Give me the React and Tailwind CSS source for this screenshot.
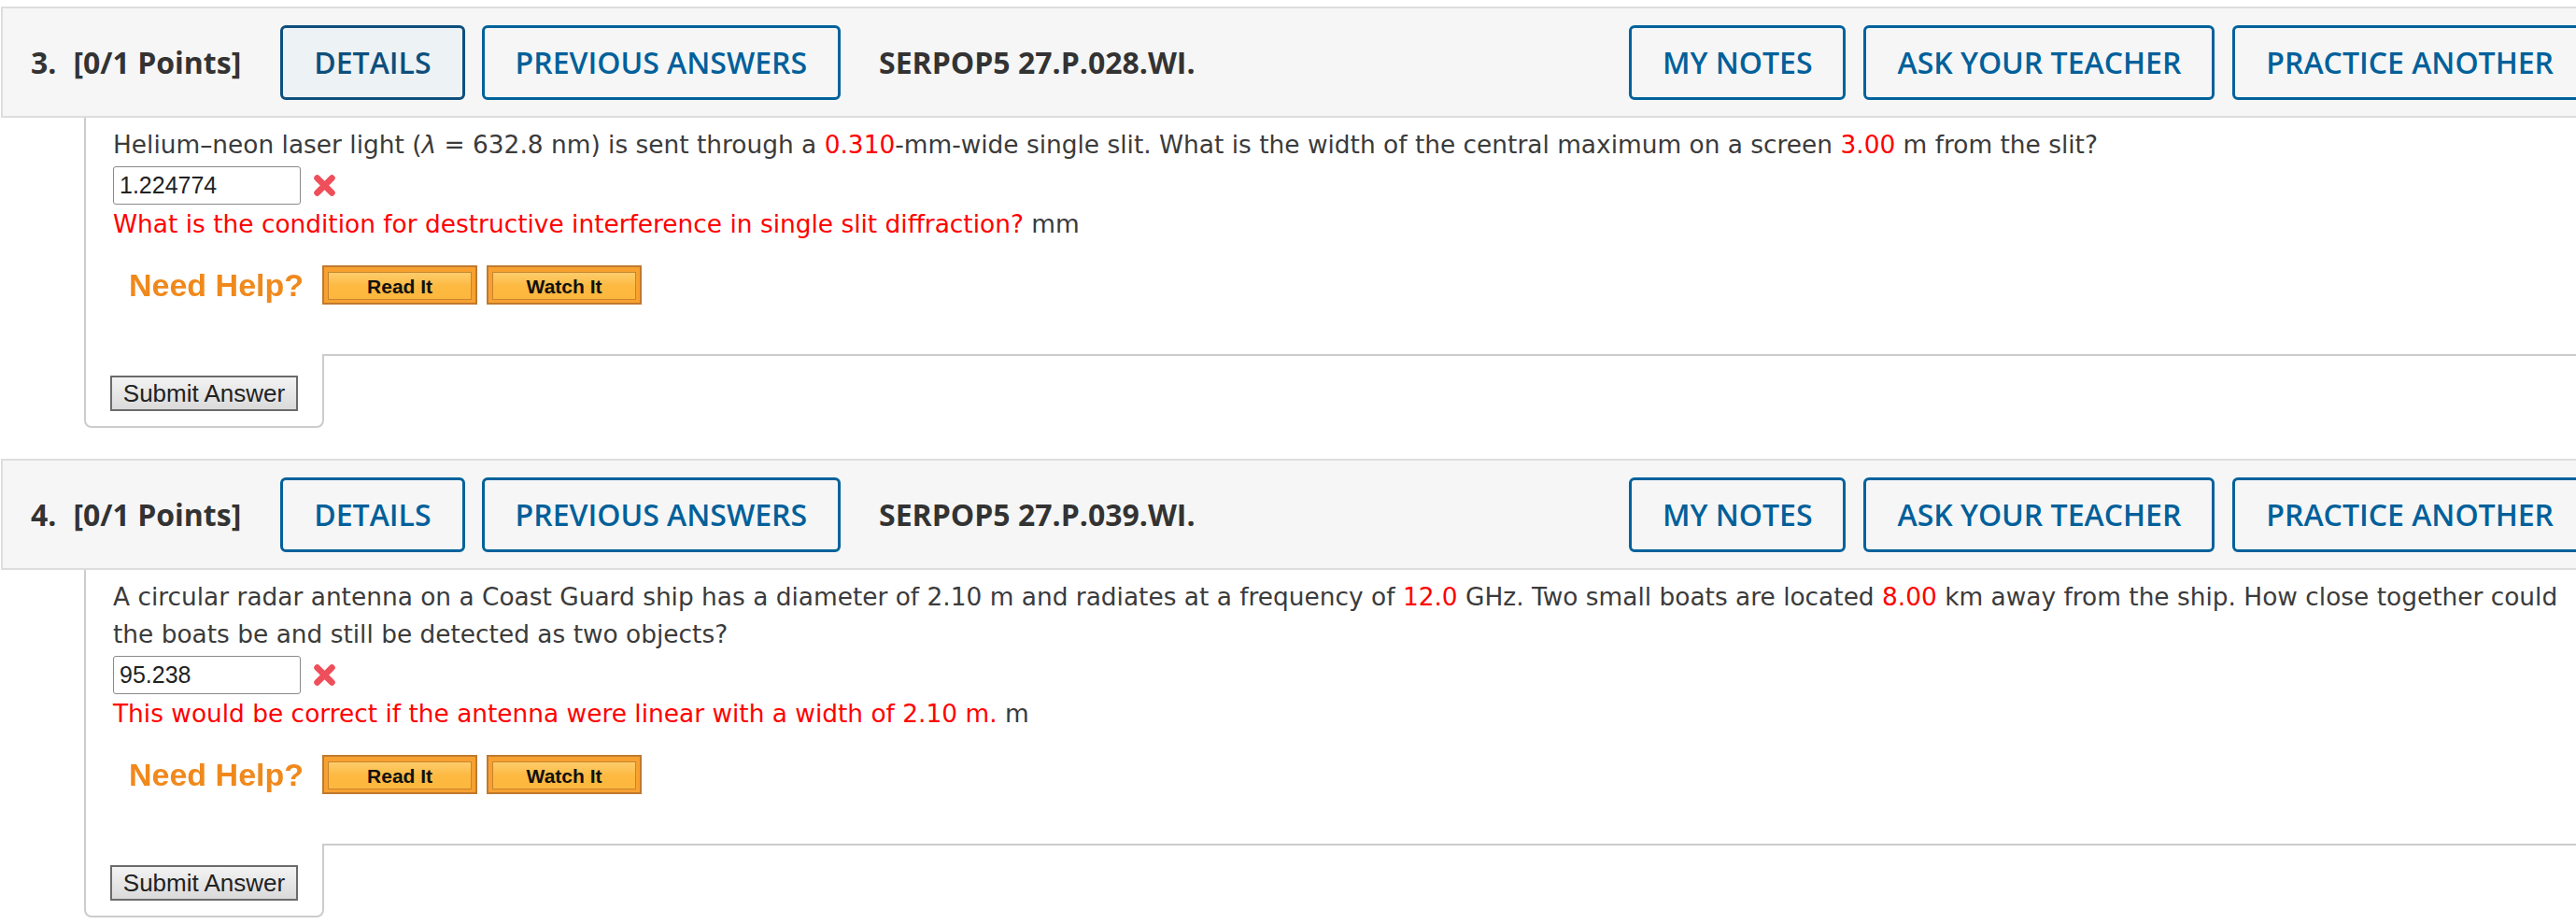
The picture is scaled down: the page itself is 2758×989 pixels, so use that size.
import React from 'react';

const hdrBtn =
  "h-[80px] px-[33px] flex items-center border-[3px] rounded-[6px] text-[32px] font-semibold whitespace-nowrap";

function XMark() {
  return (
    <svg width="27" height="27" viewBox="0 0 24 24" className="shrink-0 blur-[0.4px]">
      <path d="M5 5 L19 19 M19 5 L5 19" stroke="#ef4f5b" strokeWidth="6" strokeLinecap="round" />
    </svg>
  );
}

function HelpBtn({ label }) {
  return (
    <div className="h-[42px] w-[166px] border-2 border-[#bf7a2f] bg-[#f8a131] px-[4px] pt-[5px] pb-[3px]">
      <div className="h-full border border-[#c8842e] bg-gradient-to-b from-[#fdcd6a] via-[#fdb941] to-[#fdb73e] flex items-center justify-center text-[21px] font-bold text-[#111] leading-none font-['Liberation_Sans',Arial,sans-serif]">
        {label}
      </div>
    </div>
  );
}

function Question({ num, code, children, answer, hint, unit, active }) {
  return (
    <div>
      <div className="h-[119px] flex items-center border-2 border-[#dddddd] bg-[#f6f6f6] pl-[30px] pr-[20px] font-['Open_Sans',sans-serif]">
        <span className="text-[32px] font-bold text-[#333] whitespace-nowrap">
          {num}.<span className="ml-[18px]">[0/1 Points]</span>
        </span>
        <div className={`${hdrBtn} ml-[42px] ${active ? 'border-[#0e4f7c] text-[#0e4f7c] bg-[#edf2f5]' : 'border-[#00629b] text-[#00609a]'}`}>DETAILS</div>
        <div className={`${hdrBtn} ml-[18px] border-[#00629b] text-[#00609a]`}>PREVIOUS ANSWERS</div>
        <span className="ml-[41px] text-[32px] font-bold text-[#333] whitespace-nowrap">{code}</span>
        <div className="ml-auto flex gap-[19px]">
          <div className={`${hdrBtn} border-[#00629b] text-[#00609a]`}>MY NOTES</div>
          <div className={`${hdrBtn} border-[#00629b] text-[#00609a]`}>ASK YOUR TEACHER</div>
          <div className={`${hdrBtn} border-[#00629b] text-[#00609a]`}>PRACTICE ANOTHER</div>
        </div>
      </div>

      <div className="ml-[89px]">
        <div className="border-l-2 border-[#cccccc] pl-[29px] pt-[9px] pb-[53px]">
          <p className="w-[2630px] text-[26.4px] leading-[40px] text-[#3b3b3b] font-['DejaVu_Sans','Verdana',sans-serif]">
            {children}
          </p>
          <div className="mt-[3px] flex items-center gap-[12px]">
            <div className="w-[201px] h-[41px] border border-[#8a8a8a] rounded-[3px] px-[6px] flex items-center text-[25px] text-[#222] font-['Liberation_Sans',Arial,sans-serif]">
              {answer}
            </div>
            <XMark />
          </div>
          <p className="mt-[1px] text-[26.4px] leading-[40px] font-['DejaVu_Sans','Verdana',sans-serif]">
            <span className="text-[#ff0000]">{hint}</span>
            <span className="text-[#3b3b3b]"> {unit}</span>
          </p>
          <div className="mt-[24px] ml-[17px] flex items-center h-[42px]">
            <span className="text-[34px] leading-none font-bold text-[#f0891c] font-['Liberation_Sans',Arial,sans-serif] mr-[20px] blur-[0.3px]">
              Need Help?
            </span>
            <HelpBtn label="Read It" />
            <div className="w-[10px]" />
            <HelpBtn label="Watch It" />
          </div>
        </div>
        <div className="flex">
          <div className="w-[257px] border-l-2 border-r-2 border-b-2 border-[#cccccc] rounded-b-[8px] pl-[26px] pt-[23px] pb-[16px]">
            <div className="w-[201px] h-[38px] border-2 border-[#6b6b6b] bg-gradient-to-b from-[#f3f3f3] to-[#dadada] flex items-center justify-center text-[26px] text-[#222] font-['Liberation_Sans',Arial,sans-serif]">
              Submit Answer
            </div>
          </div>
          <div className="flex-1 border-t-2 border-[#cccccc]" />
        </div>
      </div>
    </div>
  );
}

const R = ({ children }) => <span className="text-[#ff0000]">{children}</span>;

export default function App() {
  return (
    <div className="w-full overflow-hidden bg-white">
      <div className="w-[2792px] pt-[7px] pl-[1px]">
        <Question
          num="3"
          code="SERPOP5 27.P.028.WI."
          answer="1.224774"
          hint="What is the condition for destructive interference in single slit diffraction?"
          unit="mm"
          active
        >
          Helium–neon laser light (<span className="italic">λ</span> = 632.8 nm) is sent through a <R>0.310</R>-mm-wide single slit. What is the width of the central maximum on a screen <R>3.00</R> m from the slit?
        </Question>
        <div className="h-[33px]" />
        <Question
          num="4"
          code="SERPOP5 27.P.039.WI."
          answer="95.238"
          hint="This would be correct if the antenna were linear with a width of 2.10 m."
          unit="m"
        >
          A circular radar antenna on a Coast Guard ship has a diameter of 2.10 m and radiates at a frequency of <R>12.0</R> GHz. Two small boats are located <R>8.00</R> km away from the ship. How close together could the boats be and still be detected as two objects?
        </Question>
      </div>
    </div>
  );
}
